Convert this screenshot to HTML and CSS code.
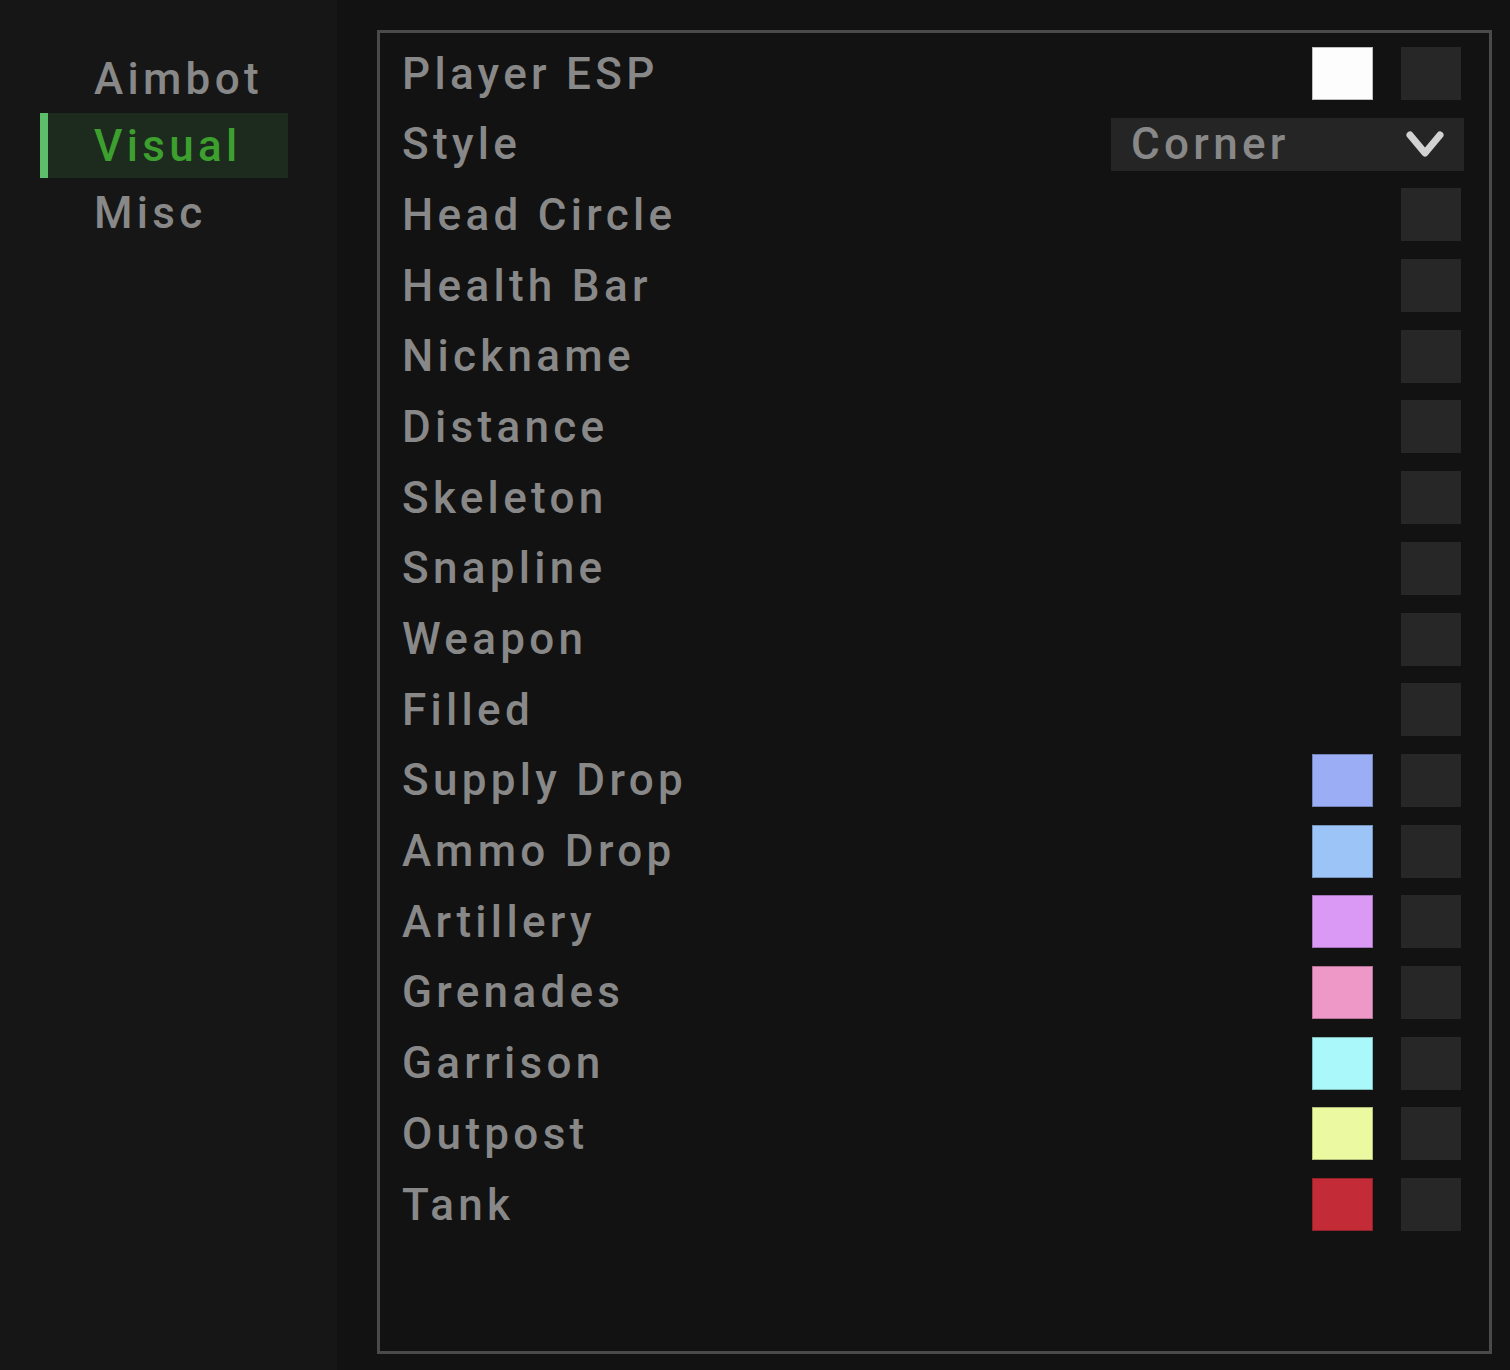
FILE: index.html
```html
<!DOCTYPE html>
<html>
<head>
<meta charset="utf-8">
<link rel="stylesheet" href="styles.css">
</head>
<body>
<div class="app">
  <nav class="sidebar">
    <div class="nav-item">Aimbot</div>
    <div class="nav-item active">Visual</div>
    <div class="nav-item">Misc</div>
  </nav>
  <main class="main">
    <section class="panel">
      <div class="row"><span class="label">Player ESP</span><span class="swatch" style="background:#fdfdfd"></span><span class="check"></span></div>
      <div class="row"><span class="label">Style</span>
        <div class="combo"><span class="combo-text">Corner</span>
          <svg class="chevron" width="38" height="30" viewBox="0 0 38 30"><path d="M4 5 L19 23 L34 5" fill="none" stroke="#d2d2d2" stroke-width="7" stroke-linecap="round" stroke-linejoin="round"/></svg>
        </div>
      </div>
      <div class="row"><span class="label">Head Circle</span><span class="check"></span></div>
      <div class="row"><span class="label">Health Bar</span><span class="check"></span></div>
      <div class="row"><span class="label">Nickname</span><span class="check"></span></div>
      <div class="row"><span class="label">Distance</span><span class="check"></span></div>
      <div class="row"><span class="label">Skeleton</span><span class="check"></span></div>
      <div class="row"><span class="label">Snapline</span><span class="check"></span></div>
      <div class="row"><span class="label">Weapon</span><span class="check"></span></div>
      <div class="row"><span class="label">Filled</span><span class="check"></span></div>
      <div class="row"><span class="label">Supply Drop</span><span class="swatch" style="background:#9badf5"></span><span class="check"></span></div>
      <div class="row"><span class="label">Ammo Drop</span><span class="swatch" style="background:#9dc4f7"></span><span class="check"></span></div>
      <div class="row"><span class="label">Artillery</span><span class="swatch" style="background:#d999f5"></span><span class="check"></span></div>
      <div class="row"><span class="label">Grenades</span><span class="swatch" style="background:#ee98c8"></span><span class="check"></span></div>
      <div class="row"><span class="label">Garrison</span><span class="swatch" style="background:#aaf8f9"></span><span class="check"></span></div>
      <div class="row"><span class="label">Outpost</span><span class="swatch" style="background:#ebfaa0"></span><span class="check"></span></div>
      <div class="row"><span class="label">Tank</span><span class="swatch" style="background:#c32b37"></span><span class="check"></span></div>
    </section>
  </main>
</div>
</body>
</html>
```
FILE: styles.css
```css
* { box-sizing: border-box; }
html, body {
  margin: 0;
  padding: 0;
  background: #121212;
  width: 1510px;
  height: 1370px;
  overflow: hidden;
}
body {
  font-family: Roboto, "Liberation Sans", sans-serif;
  font-weight: 500;
  font-size: 44px;
  letter-spacing: 4.3px;
  color: #888888;
}
.app {
  display: flex;
  height: 1370px;
}
.sidebar {
  width: 337px;
  flex: none;
  background: #161616;
  padding: 46px 0 0 40px;
  display: flex;
  flex-direction: column;
  gap: 2px;
}
.nav-item {
  width: 248px;
  height: 65px;
  display: flex;
  align-items: center;
  padding-left: 54px;
  color: #888888;
}
.nav-item.active {
  background: #1d2b1f;
  border-left: 8px solid #5cbd6b;
  padding-left: 46px;
  color: #3c9f2e;
}
.main {
  flex: 1;
  padding: 30px 18px 16px 40px;
  display: flex;
}
.panel {
  flex: 1;
  border: 3px solid #4a4a4a;
  padding: 14px 28px 0 22px;
  display: flex;
  flex-direction: column;
  gap: 17.7px;
}
.row {
  height: 53px;
  display: flex;
  align-items: center;
}
.label {
  flex: 1;
}
.swatch {
  width: 61px;
  height: 53px;
  margin-right: 28px;
  box-shadow: inset 0 0 0 1px rgba(0,0,0,0.25);
}
.check {
  width: 60px;
  height: 53px;
  background: #272727;
}
.combo {
  width: 353px;
  height: 53px;
  margin-right: -3px;
  background: #252525;
  display: flex;
  align-items: center;
  justify-content: space-between;
  padding: 0 20px 0 20px;
}
.combo-text {
  color: #888888;
}
.chevron {
  display: block;
  margin-top: 1px;
}
```
